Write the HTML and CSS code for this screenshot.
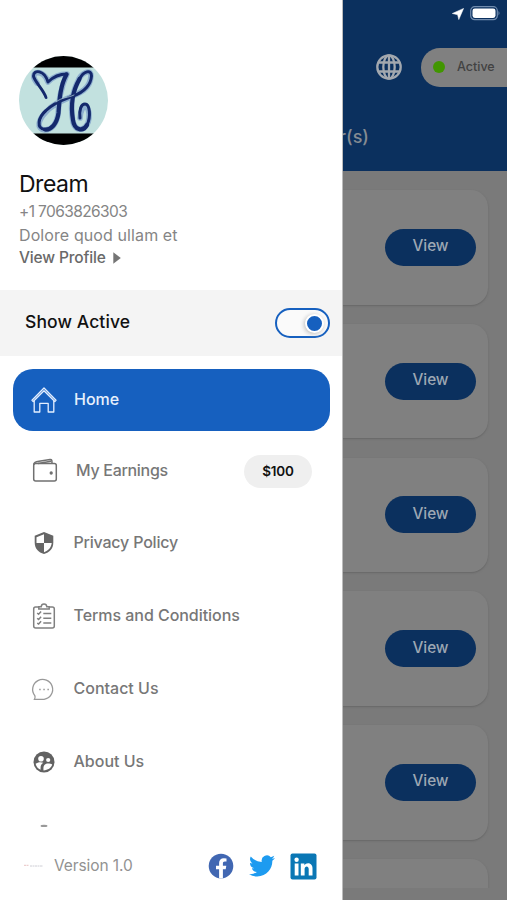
FILE: index.html
```html
<!DOCTYPE html>
<html lang="en">
<head>
<meta charset="utf-8">
<title>Menu</title>
<link rel="stylesheet" href="styles.css">
</head>
<body>
<main class="screen">
  <header class="topbar">
    <div class="tools">
      <svg class="globe" viewBox="0 0 26 26" fill="none" stroke="#a3a8af" stroke-width="2.3"><circle cx="13" cy="13" r="11.7"/><ellipse cx="13" cy="13" rx="5.7" ry="11.7"/><path d="M13 1v24M2.5 8.5h21M2.5 17.5h21"/></svg>
      <div class="status"><i class="dot"></i><span>Active</span></div>
    </div>
    <h1 class="heading">Order(s)</h1>
  </header>
  <section class="list">
    <article class="card"><button class="view">View</button></article>
    <article class="card"><button class="view">View</button></article>
    <article class="card"><button class="view">View</button></article>
    <article class="card"><button class="view">View</button></article>
    <article class="card"><button class="view">View</button></article>
    <article class="card"></article>
  </section>
</main>
<div class="phone-status">
  <svg width="12" height="12" viewBox="0 0 12 12"><path d="M11.6.4 6.8 11.6 5.6 6.7.3 5.5z" fill="#fff" stroke="#fff" stroke-width=".5"/></svg>
  <svg width="31" height="15" viewBox="0 0 31 15"><rect x=".7" y=".7" width="26.6" height="13" rx="4" fill="none" stroke="#718cae" stroke-width="1.2"/><rect x="2.5" y="2.5" width="23" height="9.4" rx="2.3" fill="#fff"/><path d="M28.5 5q2 2.2 0 4.4z" fill="#718cae"/></svg>
</div>
<aside class="drawer">
  <section class="profile">
    <svg class="avatar" viewBox="0 0 89 89">
      <defs><clipPath id="round"><circle cx="44.5" cy="44.5" r="44.5"/></clipPath></defs>
      <g clip-path="url(#round)"><path d="M0 0h89v89H0z" fill="#c2e1df"/><path d="M0 0h89v11.5H0zM0 77.5h89V89H0z" fill="#000"/>
      <g fill="none" stroke-linecap="round" stroke-linejoin="round">
        <g stroke="#8fb0cf" stroke-width="5.6"><path d="M18 27C8 16 24 11 29 26c5-5 11-8 19-8-7 15-8 27-9 41-2 10-7 15-13 15-9-1-7-10 1-18 14-17 44-14 45-36 0-8-10-3-13 5-8 16-7 29-5 41 3 12 15 8 16-4 1-15-8-15-9 0"/></g>
        <g stroke="#14296c"><path d="M27 41.500C25 34 15 25 14.500 20c0-7 11-6 14.500 6 5-5 11-8 19-8" stroke-width="2.900"/><path d="M47.500 18.500C41 30 40.500 44 39.500 57 38 68 32 74 26 73.500" stroke-width="4.200"/><path d="M26 73.500c-9-1-7-12 1-19 8-8 18-11 27-14.500C66 36 72 28 72.500 20c0-7-8-5-12 3" stroke-width="3"/><path d="M60.500 23C53 36 52 52 54 64c1.200 10 10 12.500 14 5" stroke-width="4.200"/><path d="M68 69c4-8 3-21-2-21-4 0-6 6-5 14" stroke-width="3"/></g>
        <path d="M37 46c6-5 12-4 18-7" stroke="#c2e1df" stroke-width=".7"/>
      </g></g>
    </svg>
    <h2 class="name">Dream</h2>
    <p class="line phone">+1 7063826303</p>
    <p class="line bio">Dolore quod ullam et</p>
    <a class="line profile-link"><span>View Profile</span><svg width="8" height="12" viewBox="0 0 8 12"><path d="M.3.3 7.8 6 .3 11.7z" fill="#757575"/></svg></a>
  </section>
  <section class="availability"><span>Show Active</span><span class="switch"><i class="knob"></i></span></section>
  <nav class="menu">
    <a class="item active">
      <svg class="icon" viewBox="0 0 28 28" fill="none" stroke="#e4efff" stroke-width="1.3" stroke-linejoin="round"><path d="M2 14.3 14 2l12 12.3-1.200 1.200L14 4.800 3.200 15.500z"/><path d="M4.200 14.500V26h5.600v-8.600h8.400V26h5.600V14.500"/></svg>
      <span class="home">Home</span></a>
    <a class="item earnings">
      <svg class="icon" viewBox="0 0 28 28" fill="none" stroke="#707070" stroke-width="1.5"><rect x="2.700" y="6.500" width="22.600" height="17.500" rx="2"/><path d="M3 8C2 5.500 5 4.700 8 4.200l11-1.800c2-.2 2 1 2 4M7 6.500l13-2.300"/><circle cx="20.200" cy="16" r=".9" fill="#707070"/></svg>
      <span class="label-earnings">My Earnings</span><b class="amount">$100</b></a>
    <a class="item privacy">
      <svg class="icon" viewBox="0 0 28 28"><path d="M14 3 4.700 6.800v7C4.700 19.500 8.500 23.600 14 25c5.500-1.400 9.300-5.500 9.300-11.200v-7z" fill="#666"/><path d="M14 5.200V14h7.700C21.300 18.400 18.400 21.800 14 23.200V14H6.500V8.200z" fill="#fff"/></svg>
      <span class="label-privacy">Privacy Policy</span></a>
    <a class="item">
      <svg class="icon" viewBox="0 0 28 28" fill="none" stroke="#808080" stroke-width="1.5"><path d="M9 5H5.500Q3.700 5 3.700 7v17q0 2 2 2h16.600q2 0 2-2V7q0-2-2-2H19"/><path d="M8.800 7V4.700h2.400C11.500 1 16.500 1 16.800 4.700h2.400V7z"/><path d="m7.200 11 1.400 1.300 2.500-2.800m-3.900 6.700 1.400 1.300 2.500-2.800m-3.900 6.500L8.600 22l2.500-2.800M13.300 11.500h8m-8 4.800h8m-8 4.800h8"/></svg>
      <span class="label-terms">Terms and Conditions</span></a>
    <a class="item">
      <svg class="icon" viewBox="0 0 28 28" fill="none" stroke="#999" stroke-width="1.3"><path d="M4.500 24.300c1-1.500.8-2.500.3-3.700A10 10 0 1 1 14.100 24.300z"/><path d="M9.200 14.500h1.500m2.600 0h1.500m2.600 0h1.500" stroke-width="1.500"/></svg>
      <span class="label-contact">Contact Us</span></a>
    <a class="item">
      <svg class="icon" viewBox="0 0 28 28"><circle cx="14" cy="14" r="10.500" fill="#626262"/><g fill="#fff"><circle cx="11" cy="10.800" r="2.800"/><circle cx="18.200" cy="12" r="2.100"/><path d="M5.600 15.800c2-1.700 5-2 7.800-1.100-2.600 1.300-3 3.600-2.800 7.100-2.600-1-4.300-3.200-5-6zM13.500 22.400c-.5-5 1.300-6.800 4.700-6.800 1.500 0 3 .4 4 1-.9 3.400-4.300 5.800-8.700 5.800z"/></g></svg>
      <span class="label-about">About Us</span></a>
    <a class="item">
      <svg class="icon" viewBox="0 0 28 28"><ellipse cx="14" cy="4" rx="3.500" ry="1.200" fill="#999"/></svg></a>
  </nav>
  <footer class="footer">
    <svg class="brand" width="20" height="4" viewBox="0 0 20 4" stroke-width="1"><path d="M0 1.300h5" stroke="#e8c4c4" stroke-dasharray="2 .5"/><path d="M6 2h13" stroke="#ceced5" stroke-dasharray="2 .5"/></svg>
    <span class="version">Version 1.0</span>
    <div class="social">
      <svg width="26" height="26" viewBox="0 0 26 26"><circle cx="13" cy="13" r="12.300" fill="#4167b2"/><path d="M11.100 25v-8.700H8v-3.500h3.100v-2.700c0-3.100 1.900-4.800 4.700-4.800l2.700.2v3.100h-1.600c-1.500 0-2 .9-2 1.900v2.300h3.400l-.6 3.500h-2.800V25z" fill="#fff"/></svg>
      <svg width="26" height="26" viewBox="0 0 24 24"><path d="M23.950 4.570a10 10 0 0 1-2.820.77 4.960 4.960 0 0 0 2.160-2.720 9.900 9.900 0 0 1-3.120 1.190 4.920 4.920 0 0 0-8.390 4.480A13.970 13.970 0 0 1 1.640 3.150a4.930 4.930 0 0 0 1.520 6.570 4.900 4.900 0 0 1-2.230-.61v.06a4.930 4.930 0 0 0 3.950 4.830 5 5 0 0 1-2.210.08 4.940 4.940 0 0 0 4.600 3.420A9.870 9.870 0 0 1 0 19.540a14 14 0 0 0 7.550 2.210c9.140 0 14.300-7.720 13.970-14.650a10 10 0 0 0 2.430-2.530z" fill="#1d9bf0"/></svg>
      <svg width="27" height="27" viewBox="0 0 27 27"><rect x=".5" y=".5" width="26" height="26" rx="2" fill="#0a77b5"/><circle cx="6.600" cy="6.800" r="2.200" fill="#fff"/><path d="M4.700 10.500h3.800v12H4.700zM10.800 10.500h3.600v1.700c1.800-3.200 8.100-2.800 8.100 3v7.300h-3.800v-6.400c0-3.600-4.100-3.300-4.100 0v6.400h-3.800z" fill="#fff"/></svg>
    </div>
  </footer>
</aside>
</body>
</html>
```

FILE: styles.css
```css
* { box-sizing: border-box; }
body { margin: 0; width: 507px; height: 900px; overflow: hidden; position: relative; font-family: Inter, "Liberation Sans", sans-serif; background: #7a7a7a; }
h1, h2, p { margin: 0; font-weight: 400; }
svg { display: block; flex: none; }
.screen { height: 900px; overflow: hidden; }
.topbar { height: 170.5px; padding-top: 48px; background: #0b305e; }
.tools { display: flex; align-items: center; justify-content: flex-end; gap: 19px; }
.globe { width: 26px; height: 26px; }
.status { width: 86px; height: 38.5px; display: flex; align-items: center; gap: 12px; padding-left: 12px; border-radius: 19px 0 0 19px; background: #808080; color: #424242; font-size: 12.5px; font-weight: 500; }
.status span { padding-bottom: 2px; }
.dot { width: 12px; height: 12px; border-radius: 50%; background: #419600; }
.heading { width: 369px; margin-top: 39px; text-align: right; font-size: 18px; line-height: 22px; font-weight: 500; color: #858b92; }
.list { display: flex; flex-direction: column; gap: 19.3px; height: 717.5px; padding: 19.5px 19px 0; overflow: hidden; }
.card { flex: none; height: 114.5px; padding: 0 12px; display: flex; align-items: center; justify-content: flex-end; border-radius: 17px; background: #808080; box-shadow: 0 1px 2px #666; }
.view { width: 91px; height: 37px; border: 0; border-radius: 19px; padding: 0 0 3px; background: #0b305e; color: #9da7b3; font: 500 15.3px Inter, sans-serif; }
.phone-status { position: absolute; top: 6px; right: 6px; display: flex; align-items: center; gap: 6px; }
.drawer { position: absolute; top: 0; left: 0; width: 343px; height: 900px; display: flex; flex-direction: column; background: #fff; border-right: 1px solid #bcbcbc; }
.profile { height: 290px; flex: none; padding: 56px 19px 0; }
.avatar { width: 89px; height: 89px; }
.name { margin: 24px 0 1px; font-size: 23px; line-height: 30px; color: #111; letter-spacing: -.5px; }
.line { display: flex; align-items: center; height: 23px; font-size: 15.5px; white-space: nowrap; color: #858585; }
.phone { letter-spacing: -.6px; }
.bio { font-size: 16px; letter-spacing: .1px; }
.profile-link { gap: 7px; font-weight: 500; color: #696969; letter-spacing: -.15px; }
.availability { height: 66px; flex: none; display: flex; align-items: center; justify-content: space-between; padding: 0 12px 0 25px; background: #f4f4f4; font-size: 17.5px; font-weight: 600; color: #111; }
.availability > span:first-child { padding-bottom: 3px; letter-spacing: .1px; font-weight: 550; }
.switch { width: 55px; height: 30px; display: flex; align-items: center; justify-content: flex-end; padding-right: 4px; border: 2px solid #1660bf; border-radius: 15px; background: #fafafa; }
.knob { width: 19px; height: 19px; border: 2px solid #fff; border-radius: 50%; background: #1660bf; box-shadow: -1px 1px 4px #bbb; }
.menu { height: 471px; flex: none; padding: 13px 12px 0; overflow: hidden; }
.item { height: 73.4px; display: flex; align-items: center; gap: 16px; padding: 0 18px 0 17.5px; font-size: 16px; font-weight: 500; color: #777; white-space: nowrap; }
.item span { padding-bottom: 2px; }
.icon { width: 28px; height: 28px; }
.active { height: 62px; margin-left: .5px; border-radius: 20px; background: #1660bf; color: #e7f0fc; }
.earnings { height: 80px; padding-left: 18.5px; gap: 17.5px; }
.label-earnings { letter-spacing: -.3px; }
.privacy { height: 63px; margin-bottom: 5px; }
.label-privacy { letter-spacing: -.2px; }
.label-terms { letter-spacing: -.05px; }
.amount { width: 68px; height: 33px; margin-left: auto; padding-bottom: 1px; display: flex; align-items: center; justify-content: center; border-radius: 17px; background: #efefef; color: #111; font-size: 13.5px; font-weight: 600; letter-spacing: -.2px; }
.footer { height: 73px; display: flex; align-items: center; padding: 5px 25px 0 24px; }
.version { margin-left: 10px; padding-bottom: 2px; font-size: 15.5px; color: #929292; letter-spacing: -.1px; }
.social { margin-left: auto; display: flex; align-items: center; gap: 15px; }
```
